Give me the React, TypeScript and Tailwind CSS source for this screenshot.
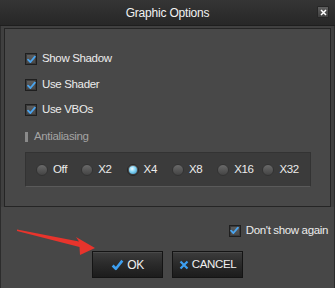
import React from "react";

function Check({ size = 12 }: { size?: number }) {
  return (
    <span className="flex h-[12px] w-[12px] items-center justify-center border border-[#1f1f1f] bg-gradient-to-b from-[#5e5e5e] to-[#474747] shadow-[inset_0_0_0_1px_#3a3a3a]">
      <svg width={size - 3} height={size - 3} viewBox="0 0 10 10">
        <path d="M1.2 5.2 L3.8 7.8 L8.8 1.8" fill="none" stroke="#4aa5f0" strokeWidth="2" strokeLinecap="round" strokeLinejoin="round" />
      </svg>
    </span>
  );
}

function CheckRow({ label }: { label: string }) {
  return (
    <div className="flex h-[20px] items-center gap-[5px]">
      <Check />
      <span className="text-[#ececec]">{label}</span>
    </div>
  );
}

function Radio({ label, checked }: { label: string; checked?: boolean }) {
  return (
    <div className="flex w-[45.3px] shrink-0 items-center gap-[5px]">
      <span
        className={
          checked
            ? "flex h-[12px] w-[12px] items-center justify-center rounded-full border border-[#262626] bg-gradient-to-b from-[#6a6a6a] to-[#3c3c3c]"
            : "h-[12px] w-[12px] rounded-full border border-[#333] bg-gradient-to-b from-[#6a6a6a] to-[#444]"
        }
      >
        {checked && <span className="h-[8px] w-[8px] rounded-full bg-[radial-gradient(circle_at_40%_35%,#effaff_0%,#8ad8f7_40%,#2f8cc0_100%)]" />}
      </span>
      <span className="text-[#ececec]">{label}</span>
    </div>
  );
}

export default function App() {
  return (
    <div
      className="relative flex h-[288px] w-[335px] flex-col overflow-hidden bg-[#474747] text-[11.5px] tracking-[-0.35px]"
      style={{ fontFamily: '"Liberation Sans", Arial, sans-serif' }}
    >
      {/* title bar */}
      <div className="relative flex h-[26px] shrink-0 items-center justify-center border-b border-[#1e1e1e] bg-gradient-to-b from-[#353535] to-[#272727]">
        <span className="text-[12px] tracking-[-0.2px] text-[#f2f2f2]">Graphic Options</span>
        <span className="absolute left-[317px] top-[6px] flex h-[12px] w-[12px] items-center justify-center rounded-[1px] border border-[#262626] bg-gradient-to-b from-[#5f5f5f] to-[#3f3f3f]">
          <svg width="7" height="7" viewBox="0 0 7 7">
            <path d="M1 1 L6 6 M6 1 L1 6" stroke="#ffffff" strokeWidth="1.5" />
          </svg>
        </span>
      </div>

      <div className="flex flex-1 flex-col border-x border-[#2c2c2c] bg-[#404040] px-[3px] pt-[2px]">
        {/* panel */}
        <div className="flex h-[179px] flex-col border border-[#252525] bg-[#484848] pl-[20px] pt-[20px]">
          <CheckRow label="Show Shadow" />
          <div className="mt-[6px]">
            <CheckRow label="Use Shader" />
          </div>
          <div className="mt-[5px]">
            <CheckRow label="Use VBOs" />
          </div>
          <div className="mt-[7px] flex h-[20px] items-center gap-[6px]">
            <span className="h-[10px] w-[3px] bg-[#8a8a8a]" />
            <span className="text-[#a4a4a4]">Antialiasing</span>
          </div>
          <div className="mt-[5px] flex h-[35px] w-[286px] items-center border border-[#333] border-b-[#5a5a5a] bg-[#3b3b3b] pl-[10px]">
            <Radio label="Off" />
            <Radio label="X2" />
            <Radio label="X4" checked />
            <Radio label="X8" />
            <Radio label="X16" />
            <Radio label="X32" />
          </div>
        </div>

        <div className="bg-[#474747] -mx-[3px] flex flex-1 flex-col">
          <div className="mt-[15px] flex items-center justify-end gap-[5px] pr-[6px]">
            <Check />
            <span className="text-[#ececec]">Don't show again</span>
          </div>
          <div className="mt-[12px] flex gap-[9px] pl-[91px]">
            <button className="flex h-[27px] w-[71px] items-center justify-center gap-[3px] border border-[#141414] bg-gradient-to-b from-[#3c3c3c] via-[#2a2a2a] to-[#1c1c1c] shadow-[inset_0_1px_0_#4a4a4a] text-[#f0f0f0]">
              <svg width="13" height="12" viewBox="0 0 12 11">
                <path d="M1.5 6 L4.5 9 L10.5 1.5" fill="none" stroke="#3d9ff0" strokeWidth="2.4" strokeLinejoin="round" />
              </svg>
              <span className="text-[12px]">OK</span>
            </button>
            <button className="flex h-[27px] w-[71px] items-center justify-center gap-[3px] border border-[#141414] bg-gradient-to-b from-[#3c3c3c] via-[#2a2a2a] to-[#1c1c1c] shadow-[inset_0_1px_0_#4a4a4a] text-[#f0f0f0]">
              <svg width="10" height="10" viewBox="0 0 10 10">
                <path d="M1.5 1.5 L8.5 8.5 M8.5 1.5 L1.5 8.5" stroke="#3d9ff0" strokeWidth="2.2" />
              </svg>
              <span className="text-[11.5px]">CANCEL</span>
            </button>
          </div>
        </div>
      </div>

      {/* red arrow annotation */}
      <svg className="pointer-events-none absolute left-0 top-0" width="335" height="288" viewBox="0 0 335 288">
        <polygon points="17,229.5 79,241.5 76,237 95,248 80,255 79.5,247 17,231" fill="#e8342c" />
      </svg>
    </div>
  );
}
